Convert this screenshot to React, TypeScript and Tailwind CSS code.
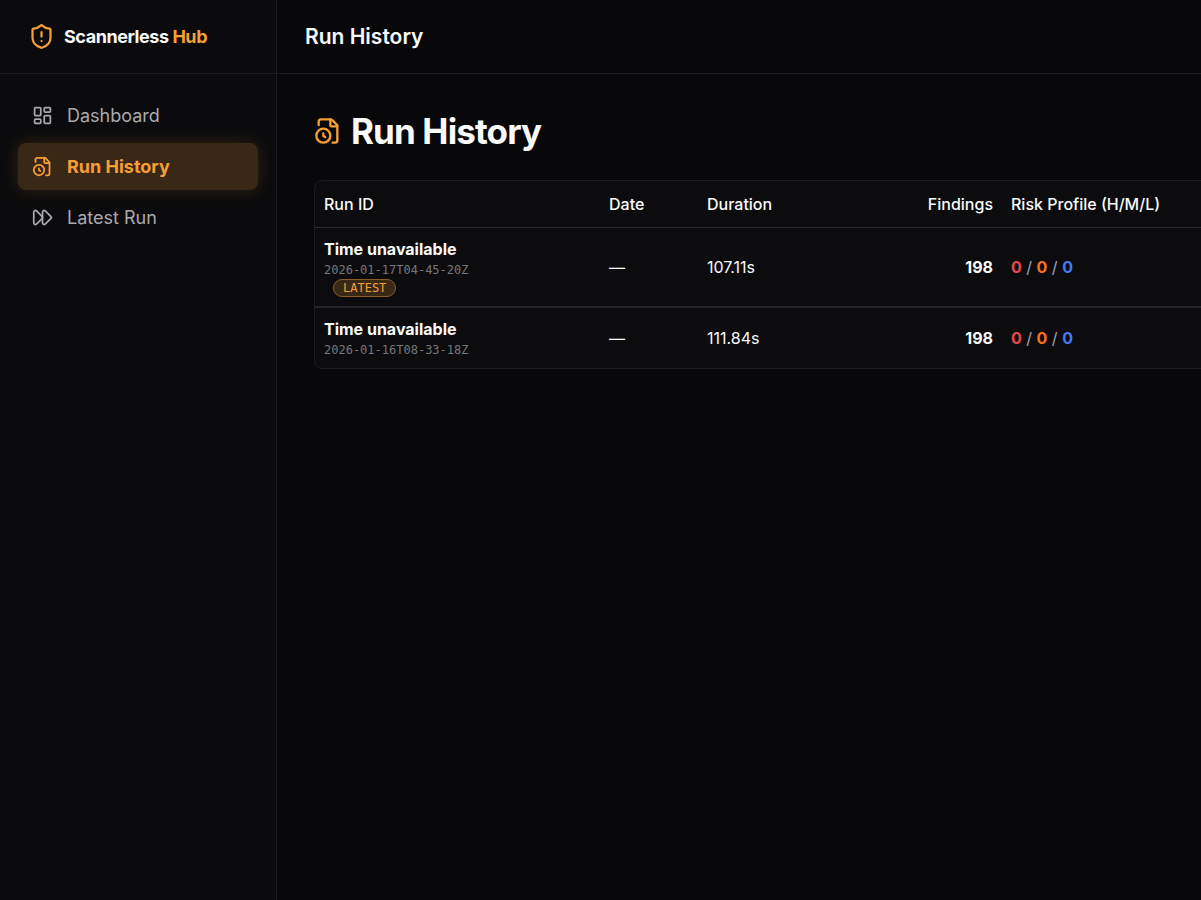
import { FastForward, FileClock, LayoutDashboard, ShieldAlert } from "lucide-react";

const navItems = [
  { label: "Dashboard", icon: LayoutDashboard, active: false },
  { label: "Run History", icon: FileClock, active: true },
  { label: "Latest Run", icon: FastForward, active: false },
];

const runs = [
  { id: "2026-01-17T04-45-20Z", duration: "107.11s", findings: 198, high: 0, medium: 0, low: 0, latest: true },
  { id: "2026-01-16T08-33-18Z", duration: "111.84s", findings: 198, high: 0, medium: 0, low: 0, latest: false },
];

function Sidebar() {
  return (
    <aside className="flex w-[277px] shrink-0 flex-col border-r border-[#1d1d1f] bg-[#0b0b0d]">
      <div className="flex h-[74px] items-center gap-[9px] border-b border-[#1d1d1f] px-7">
        <ShieldAlert className="size-[27px] text-[#f79f36]" strokeWidth={2} aria-hidden="true" />
        <span className="text-[18px] font-bold tracking-tight text-[#fafafa]">
          Scannerless <span className="text-[#f79f36]">Hub</span>
        </span>
      </div>
      <nav className="flex flex-col gap-1 px-[18px] py-[18px]">
        {navItems.map(({ label, icon: Icon, active }) => (
          <a
            key={label}
            href="#"
            aria-current={active ? "page" : undefined}
            className={
              active
                ? "flex h-[47px] items-center gap-3.5 rounded-lg bg-[#3a2817] px-3.5 text-[18px] font-bold text-[#f79f36] shadow-[0_0_17px_rgba(247,159,54,0.16)]"
                : "flex h-[47px] items-center gap-3.5 rounded-lg px-3.5 text-[18px] text-[#a9a9ac]"
            }
          >
            <Icon className="size-[21px]" strokeWidth={2} aria-hidden="true" />
            {label}
          </a>
        ))}
      </nav>
    </aside>
  );
}

function RunTable() {
  return (
    <div className="min-w-[1080px] overflow-hidden rounded-lg border border-[#1d1d1f] bg-[#0c0c0e]">
      <table className="w-full table-fixed text-base text-[#fafafa]">
        <colgroup>
          <col className="w-[285px]" />
          <col className="w-[98px]" />
          <col className="w-[154px]" />
          <col className="w-[150px]" />
          <col />
        </colgroup>
        <thead>
          <tr className="h-[46px] border-b border-[#2b2b2e] text-left">
            <th scope="col" className="px-[9px] font-medium">Run ID</th>
            <th scope="col" className="px-[9px] font-medium">Date</th>
            <th scope="col" className="px-[9px] font-medium">Duration</th>
            <th scope="col" className="px-[9px] text-right font-medium">Findings</th>
            <th scope="col" className="px-[9px] font-medium">Risk Profile (H/M/L)</th>
          </tr>
        </thead>
        <tbody className="divide-y-2 divide-[#232326]">
          {runs.map((run) => (
            <tr key={run.id}>
              <td className="px-[9px] py-[9px]">
                <div className="leading-6 font-bold">Time unavailable</div>
                <div className="font-['DejaVu_Sans_Mono',monospace] text-[12px] leading-[18px] text-[#77777b]">
                  {run.id}
                  {run.latest && (
                    <div>
                      <span className="ml-[9px] inline-flex h-[18px] items-center rounded-full border border-[#8a5d28] bg-[#3a2817] px-[9px] align-top text-[#f79f36]">
                        LATEST
                      </span>
                    </div>
                  )}
                </div>
              </td>
              <td className="px-[9px]">—</td>
              <td className="px-[9px]">{run.duration}</td>
              <td className="px-[9px] text-right font-bold">{run.findings}</td>
              <td className="px-[9px] text-[#a1a1aa]">
                <span className="font-bold text-[#e5484d]">{run.high}</span> /{" "}
                <span className="font-bold text-[#f97316]">{run.medium}</span> /{" "}
                <span className="font-bold text-[#4478f5]">{run.low}</span>
              </td>
            </tr>
          ))}
        </tbody>
      </table>
    </div>
  );
}

export default function App() {
  return (
    <div className="flex min-h-screen bg-[#08080a] font-['Inter',sans-serif] text-[#fafafa]">
      <Sidebar />
      <div className="min-w-0 flex-1 overflow-x-hidden">
        <header className="flex h-[74px] items-center border-b border-[#1d1d1f] px-7">
          <span className="text-[21px] font-semibold">Run History</span>
        </header>
        <main className="px-[37px] pt-[34px]">
          <h1 className="mb-[26px] flex h-[46px] items-center gap-[9px] text-[35px] font-bold tracking-tight">
            <FileClock className="size-7 text-[#f79f36]" strokeWidth={2} aria-hidden="true" />
            Run History
          </h1>
          <RunTable />
        </main>
      </div>
    </div>
  );
}
